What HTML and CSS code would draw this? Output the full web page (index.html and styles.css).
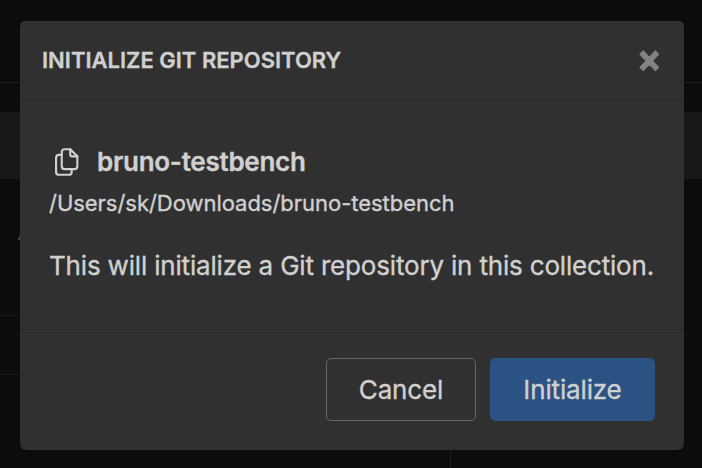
FILE: index.html
```html
<!DOCTYPE html>
<html lang="en">
<head>
<meta charset="utf-8">
<title>Initialize Git Repository</title>
<link rel="stylesheet" href="styles.css">
</head>
<body>
<div class="backdrop" aria-hidden="true">
  <div class="strip strip-top"></div>
  <div class="strip strip-gap"></div>
  <div class="strip strip-band"></div>
  <div class="strip strip-content"></div>
  <div class="strip strip-row"></div>
  <div class="strip strip-bottom"><div class="divider"></div></div>
  <svg class="fragment" width="2" height="5" viewBox="0 0 2 5"><path d="M2 0v5H0z" fill="#505050"/></svg>
</div>
<section class="modal" role="dialog" aria-labelledby="title">
  <header class="modal-header">
    <h1 id="title" class="title">INITIALIZE GIT REPOSITORY</h1>
    <button class="close" aria-label="Close">
      <svg width="22" height="24" viewBox="0 0 22 24"><path d="M5.2 3 11.3 9.3 17.4 3 20.6 6.3 14.5 12.8 20.6 19.3 17.4 22.6 11.3 16.3 5.2 22.6 2 19.3 8.1 12.8 2 6.3z"/></svg>
    </button>
  </header>
  <main class="modal-body">
    <div class="collection">
      <svg class="files" width="34" height="34" viewBox="0 0 24 24"><path d="M15 3v4a1 1 0 0 0 1 1h4"/><path d="M18 17h-7a2 2 0 0 1-2-2V5a2 2 0 0 1 2-2h4l5 5v7a2 2 0 0 1-2 2z"/><path d="M16 17v2a2 2 0 0 1-2 2H7a2 2 0 0 1-2-2V9a2 2 0 0 1 2-2h2"/></svg>
      <span class="name">bruno-testbench</span>
    </div>
    <div class="path">/Users/sk/Downloads/bruno-testbench</div>
    <p class="message">This will initialize a Git repository in this collection.</p>
  </main>
  <footer class="modal-footer">
    <button class="btn cancel">Cancel</button>
    <button class="btn submit">Initialize</button>
  </footer>
</section>
</body>
</html>
```
FILE: styles.css
```css
* { box-sizing: border-box; }
body {
  margin: 0;
  width: 702px;
  height: 468px;
  overflow: hidden;
  position: relative;
  background: #0c0c0c;
  color: #d0d0d0;
  font-family: Inter, sans-serif;
  -webkit-text-stroke: 0.35px currentColor;
}
.backdrop { position: absolute; inset: 0; display: flex; flex-direction: column; }
.strip { flex: none; }
.strip-top { height: 83px; border-bottom: 1px solid #202020; }
.strip-gap { height: 29px; }
.strip-band { height: 67px; background: #191919; }
.strip-content { height: 137px; width: 50%; border-bottom: 1px solid #181818; }
.strip-row { height: 59px; width: 50%; border-bottom: 1px solid #181818; }
.strip-bottom { flex: 1; }
.divider { width: 451px; height: 100%; border-right: 1px solid #202020; }
.fragment { position: absolute; left: 18px; top: 235px; }
.modal {
  position: relative;
  width: 664px;
  height: 429px;
  margin: 21px 0 0 20px;
  display: flex;
  flex-direction: column;
  overflow: hidden;
  background: #303030;
  border-radius: 6px;
  box-shadow: inset 0 1px 0 #363636;
}
.modal-header {
  height: 79px;
  padding: 0 24px 0 22px;
  display: flex;
  align-items: center;
  justify-content: space-between;
  border-bottom: 1px solid #292929;
}
.title { margin: 0; font-size: 22px; line-height: 28px; font-weight: 600; white-space: nowrap; }
.close { padding: 0; border: 0; background: none; width: 22px; height: 24px; }
.close svg { display: block; fill: #828282; stroke: #828282; stroke-width: 1.2; stroke-linejoin: round; }
.modal-body { height: 230px; padding: 43px 30px 0 29px; border-bottom: 1px solid #292929; white-space: nowrap; }
.collection { display: flex; align-items: center; height: 36px; }
.files { margin-top: 1px; fill: none; stroke: #d0d0d0; stroke-width: 1.5; stroke-linecap: round; stroke-linejoin: round; }
.name { margin-left: 14px; font-size: 26px; font-weight: 600; letter-spacing: -0.27px; }
.path { margin-top: 8px; font-size: 22px; line-height: 32px; letter-spacing: -0.03px; }
.message { margin: 27px 0 0; font-size: 26px; line-height: 40px; letter-spacing: -0.18px; }
.modal-footer { flex: 1; padding: 28px 29px 0 0; display: flex; justify-content: flex-end; gap: 14px; }
.btn { height: 63px; padding: 0; border-radius: 5px; font: 400 26px Inter, sans-serif; letter-spacing: -0.15px; color: #d0d0d0; }
.cancel { width: 150px; background: none; border: 1px solid #686868; }
.submit { width: 165px; background: #2a5384; border: 0; }
```
